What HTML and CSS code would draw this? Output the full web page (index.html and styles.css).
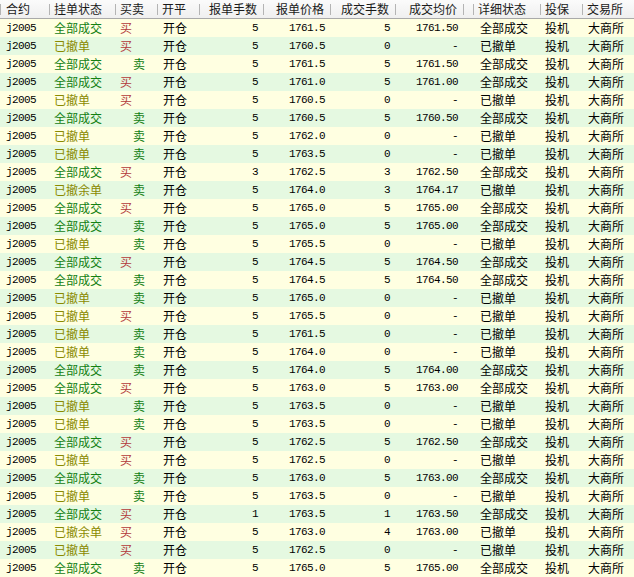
FILE: index.html
```html
<!DOCTYPE html>
<html lang="zh-CN">
<head>
<meta charset="utf-8">
<title>委托列表</title>
<link rel="stylesheet" href="styles.css">
</head>
<body>
<table class="grid">
<colgroup>
<col class="c1"><col class="c2"><col class="c3"><col class="c4"><col class="c5"><col class="c6"><col class="c7"><col class="c8"><col class="c9"><col class="c10"><col class="c11"><col class="c12">
</colgroup>
<thead>
<tr>
<th class="l">合约</th><th class="l">挂单状态</th><th class="l">买卖</th><th class="l">开平</th><th class="r">报单手数</th><th class="r">报单价格</th><th class="r">成交手数</th><th class="r">成交均价</th><th></th><th class="l">详细状态</th><th class="l">投保</th><th class="l">交易所</th>
</tr>
</thead>
<tbody>
<tr><td class="code">j2005</td><td class="st ok">全部成交</td><td class="bs buy">买</td><td class="oc">开仓</td><td class="num">5</td><td class="num">1761.5</td><td class="num">5</td><td class="num">1761.50</td><td></td><td class="det">全部成交</td><td class="hg">投机</td><td class="ex">大商所</td></tr>
<tr><td class="code">j2005</td><td class="st cx">已撤单</td><td class="bs buy">买</td><td class="oc">开仓</td><td class="num">5</td><td class="num">1760.5</td><td class="num">0</td><td class="num">-</td><td></td><td class="det">已撤单</td><td class="hg">投机</td><td class="ex">大商所</td></tr>
<tr><td class="code">j2005</td><td class="st ok">全部成交</td><td class="bs sell">卖</td><td class="oc">开仓</td><td class="num">5</td><td class="num">1761.5</td><td class="num">5</td><td class="num">1761.50</td><td></td><td class="det">全部成交</td><td class="hg">投机</td><td class="ex">大商所</td></tr>
<tr><td class="code">j2005</td><td class="st ok">全部成交</td><td class="bs buy">买</td><td class="oc">开仓</td><td class="num">5</td><td class="num">1761.0</td><td class="num">5</td><td class="num">1761.00</td><td></td><td class="det">全部成交</td><td class="hg">投机</td><td class="ex">大商所</td></tr>
<tr><td class="code">j2005</td><td class="st cx">已撤单</td><td class="bs buy">买</td><td class="oc">开仓</td><td class="num">5</td><td class="num">1760.5</td><td class="num">0</td><td class="num">-</td><td></td><td class="det">已撤单</td><td class="hg">投机</td><td class="ex">大商所</td></tr>
<tr><td class="code">j2005</td><td class="st ok">全部成交</td><td class="bs sell">卖</td><td class="oc">开仓</td><td class="num">5</td><td class="num">1760.5</td><td class="num">5</td><td class="num">1760.50</td><td></td><td class="det">全部成交</td><td class="hg">投机</td><td class="ex">大商所</td></tr>
<tr><td class="code">j2005</td><td class="st cx">已撤单</td><td class="bs sell">卖</td><td class="oc">开仓</td><td class="num">5</td><td class="num">1762.0</td><td class="num">0</td><td class="num">-</td><td></td><td class="det">已撤单</td><td class="hg">投机</td><td class="ex">大商所</td></tr>
<tr><td class="code">j2005</td><td class="st cx">已撤单</td><td class="bs sell">卖</td><td class="oc">开仓</td><td class="num">5</td><td class="num">1763.5</td><td class="num">0</td><td class="num">-</td><td></td><td class="det">已撤单</td><td class="hg">投机</td><td class="ex">大商所</td></tr>
<tr><td class="code">j2005</td><td class="st ok">全部成交</td><td class="bs buy">买</td><td class="oc">开仓</td><td class="num">3</td><td class="num">1762.5</td><td class="num">3</td><td class="num">1762.50</td><td></td><td class="det">全部成交</td><td class="hg">投机</td><td class="ex">大商所</td></tr>
<tr><td class="code">j2005</td><td class="st cx">已撤余单</td><td class="bs sell">卖</td><td class="oc">开仓</td><td class="num">5</td><td class="num">1764.0</td><td class="num">3</td><td class="num">1764.17</td><td></td><td class="det">已撤单</td><td class="hg">投机</td><td class="ex">大商所</td></tr>
<tr><td class="code">j2005</td><td class="st ok">全部成交</td><td class="bs buy">买</td><td class="oc">开仓</td><td class="num">5</td><td class="num">1765.0</td><td class="num">5</td><td class="num">1765.00</td><td></td><td class="det">全部成交</td><td class="hg">投机</td><td class="ex">大商所</td></tr>
<tr><td class="code">j2005</td><td class="st ok">全部成交</td><td class="bs sell">卖</td><td class="oc">开仓</td><td class="num">5</td><td class="num">1765.0</td><td class="num">5</td><td class="num">1765.00</td><td></td><td class="det">全部成交</td><td class="hg">投机</td><td class="ex">大商所</td></tr>
<tr><td class="code">j2005</td><td class="st cx">已撤单</td><td class="bs sell">卖</td><td class="oc">开仓</td><td class="num">5</td><td class="num">1765.5</td><td class="num">0</td><td class="num">-</td><td></td><td class="det">已撤单</td><td class="hg">投机</td><td class="ex">大商所</td></tr>
<tr><td class="code">j2005</td><td class="st ok">全部成交</td><td class="bs buy">买</td><td class="oc">开仓</td><td class="num">5</td><td class="num">1764.5</td><td class="num">5</td><td class="num">1764.50</td><td></td><td class="det">全部成交</td><td class="hg">投机</td><td class="ex">大商所</td></tr>
<tr><td class="code">j2005</td><td class="st ok">全部成交</td><td class="bs sell">卖</td><td class="oc">开仓</td><td class="num">5</td><td class="num">1764.5</td><td class="num">5</td><td class="num">1764.50</td><td></td><td class="det">全部成交</td><td class="hg">投机</td><td class="ex">大商所</td></tr>
<tr><td class="code">j2005</td><td class="st cx">已撤单</td><td class="bs sell">卖</td><td class="oc">开仓</td><td class="num">5</td><td class="num">1765.0</td><td class="num">0</td><td class="num">-</td><td></td><td class="det">已撤单</td><td class="hg">投机</td><td class="ex">大商所</td></tr>
<tr><td class="code">j2005</td><td class="st cx">已撤单</td><td class="bs buy">买</td><td class="oc">开仓</td><td class="num">5</td><td class="num">1765.5</td><td class="num">0</td><td class="num">-</td><td></td><td class="det">已撤单</td><td class="hg">投机</td><td class="ex">大商所</td></tr>
<tr><td class="code">j2005</td><td class="st cx">已撤单</td><td class="bs sell">卖</td><td class="oc">开仓</td><td class="num">5</td><td class="num">1761.5</td><td class="num">0</td><td class="num">-</td><td></td><td class="det">已撤单</td><td class="hg">投机</td><td class="ex">大商所</td></tr>
<tr><td class="code">j2005</td><td class="st cx">已撤单</td><td class="bs sell">卖</td><td class="oc">开仓</td><td class="num">5</td><td class="num">1764.0</td><td class="num">0</td><td class="num">-</td><td></td><td class="det">已撤单</td><td class="hg">投机</td><td class="ex">大商所</td></tr>
<tr><td class="code">j2005</td><td class="st ok">全部成交</td><td class="bs sell">卖</td><td class="oc">开仓</td><td class="num">5</td><td class="num">1764.0</td><td class="num">5</td><td class="num">1764.00</td><td></td><td class="det">全部成交</td><td class="hg">投机</td><td class="ex">大商所</td></tr>
<tr><td class="code">j2005</td><td class="st ok">全部成交</td><td class="bs buy">买</td><td class="oc">开仓</td><td class="num">5</td><td class="num">1763.0</td><td class="num">5</td><td class="num">1763.00</td><td></td><td class="det">全部成交</td><td class="hg">投机</td><td class="ex">大商所</td></tr>
<tr><td class="code">j2005</td><td class="st cx">已撤单</td><td class="bs sell">卖</td><td class="oc">开仓</td><td class="num">5</td><td class="num">1763.5</td><td class="num">0</td><td class="num">-</td><td></td><td class="det">已撤单</td><td class="hg">投机</td><td class="ex">大商所</td></tr>
<tr><td class="code">j2005</td><td class="st cx">已撤单</td><td class="bs sell">卖</td><td class="oc">开仓</td><td class="num">5</td><td class="num">1763.5</td><td class="num">0</td><td class="num">-</td><td></td><td class="det">已撤单</td><td class="hg">投机</td><td class="ex">大商所</td></tr>
<tr><td class="code">j2005</td><td class="st ok">全部成交</td><td class="bs buy">买</td><td class="oc">开仓</td><td class="num">5</td><td class="num">1762.5</td><td class="num">5</td><td class="num">1762.50</td><td></td><td class="det">全部成交</td><td class="hg">投机</td><td class="ex">大商所</td></tr>
<tr><td class="code">j2005</td><td class="st cx">已撤单</td><td class="bs buy">买</td><td class="oc">开仓</td><td class="num">5</td><td class="num">1762.5</td><td class="num">0</td><td class="num">-</td><td></td><td class="det">已撤单</td><td class="hg">投机</td><td class="ex">大商所</td></tr>
<tr><td class="code">j2005</td><td class="st ok">全部成交</td><td class="bs sell">卖</td><td class="oc">开仓</td><td class="num">5</td><td class="num">1763.0</td><td class="num">5</td><td class="num">1763.00</td><td></td><td class="det">全部成交</td><td class="hg">投机</td><td class="ex">大商所</td></tr>
<tr><td class="code">j2005</td><td class="st cx">已撤单</td><td class="bs sell">卖</td><td class="oc">开仓</td><td class="num">5</td><td class="num">1763.5</td><td class="num">0</td><td class="num">-</td><td></td><td class="det">已撤单</td><td class="hg">投机</td><td class="ex">大商所</td></tr>
<tr><td class="code">j2005</td><td class="st ok">全部成交</td><td class="bs buy">买</td><td class="oc">开仓</td><td class="num">1</td><td class="num">1763.5</td><td class="num">1</td><td class="num">1763.50</td><td></td><td class="det">全部成交</td><td class="hg">投机</td><td class="ex">大商所</td></tr>
<tr><td class="code">j2005</td><td class="st cx">已撤余单</td><td class="bs buy">买</td><td class="oc">开仓</td><td class="num">5</td><td class="num">1763.0</td><td class="num">4</td><td class="num">1763.00</td><td></td><td class="det">已撤单</td><td class="hg">投机</td><td class="ex">大商所</td></tr>
<tr><td class="code">j2005</td><td class="st cx">已撤单</td><td class="bs buy">买</td><td class="oc">开仓</td><td class="num">5</td><td class="num">1762.5</td><td class="num">0</td><td class="num">-</td><td></td><td class="det">已撤单</td><td class="hg">投机</td><td class="ex">大商所</td></tr>
<tr><td class="code">j2005</td><td class="st ok">全部成交</td><td class="bs sell">卖</td><td class="oc">开仓</td><td class="num">5</td><td class="num">1765.0</td><td class="num">5</td><td class="num">1765.00</td><td></td><td class="det">全部成交</td><td class="hg">投机</td><td class="ex">大商所</td></tr>
</tbody>
</table>
</body>
</html>
```

FILE: styles.css
```css
html, body {
  margin: 0;
  padding: 0;
  background: #ffffe1;
}
body {
  font-family: "Noto Sans CJK SC", "Liberation Sans", sans-serif;
  font-size: 12px;
  color: #000;
}
.grid {
  width: 634px;
  table-layout: fixed;
  border-collapse: collapse;
  border-spacing: 0;
}
.c1 { width: 49px; }
.c2 { width: 66px; }
.c3 { width: 42px; }
.c4 { width: 42px; }
.c5 { width: 64px; }
.c6 { width: 67px; }
.c7 { width: 65px; }
.c8 { width: 68px; }
.c9 { width: 10px; }
.c10 { width: 67px; }
.c11 { width: 42px; }
.c12 { width: 52px; }

.grid th {
  height: 18px;
  padding: 0 5px;
  font-weight: normal;
  font-size: 12px;
  line-height: 18px;
  white-space: nowrap;
  overflow: hidden;
  color: #1a1a1a;
  background: linear-gradient(#fbfbfb, #efefef);
  border-bottom: 1px solid #a9a9a9;
  position: relative;
}
.grid th::before {
  content: "";
  position: absolute;
  left: 0;
  top: 4px;
  width: 1px;
  height: 11px;
  background: #b4b4b4;
}
.grid th.l { text-align: left; }
.grid th.r { text-align: right; padding-right: 6px; }
.grid th:first-child { padding-left: 6px; }

.grid td {
  height: 18px;
  padding: 0 5px;
  line-height: 18px;
  white-space: nowrap;
  overflow: hidden;
  vertical-align: middle;
}
.grid tbody tr:nth-child(odd) td { background: #ffffe1; }
.grid tbody tr:nth-child(even) td { background: #e5f9e1; }

.code {
  font-family: "Liberation Mono", "DejaVu Sans Mono", monospace;
  font-size: 11px;
  letter-spacing: -0.6px;
  padding-left: 6px !important;
}
.num {
  text-align: right;
  font-family: "Liberation Mono", "DejaVu Sans Mono", monospace;
  font-size: 11px;
  letter-spacing: -0.6px;
}
.st.ok { color: #138013; }
.st.cx { color: #8a8a00; }
.bs.buy { color: #b33a3a; }
.bs.sell { color: #138013; padding-left: 18px; }
.oc { padding-left: 6px !important; }
.det { padding-left: 7px !important; }
.ex { padding-left: 6px !important; }
```
